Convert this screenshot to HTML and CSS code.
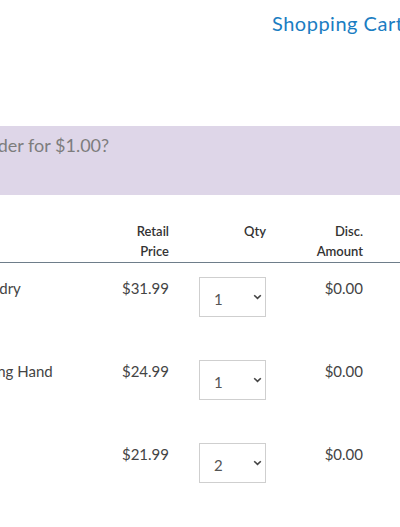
FILE: index.html
```html
<!DOCTYPE html>
<html lang="en">
<head>
  <meta charset="UTF-8">
  <meta name="viewport" content="width=device-width, initial-scale=1.0">
  <title>Shopping Cart</title>
  <link rel="stylesheet" href="styles.css">
</head>
<body>
  <div class="page">
    <header class="cart-header">
      <h1 class="cart-title">Shopping Cart</h1>
    </header>

    <div class="roundup">
      <p>Would you like to round up your order for $1.00?</p>
    </div>

    <div class="cart">
      <div class="cart-row cart-head">
        <div class="col-name">Item</div>
        <div class="col-price">Retail<br>Price</div>
        <div class="col-qty">Qty</div>
        <div class="col-disc">Disc.<br>Amount</div>
        <div class="col-total">Total</div>
      </div>

      <div class="cart-row item">
        <div class="col-name">Reusable 6 Wool Dryer Balls for Laundry</div>
        <div class="col-price">$31.99</div>
        <div class="col-qty">
          <div class="qty-select">
            <select><option selected>1</option><option>2</option><option>3</option></select>
            <svg class="chev" width="9" height="6" viewBox="0 0 9 6"><path d="M1.2 1.2l3.3 3.2 3.3-3.2" fill="none" stroke="#444" stroke-width="1.6"/></svg>
          </div>
        </div>
        <div class="col-disc">$0.00</div>
        <div class="col-total">$31.99</div>
      </div>

      <div class="cart-row item">
        <div class="col-name">Reacher Grabber Pickup Tool &amp; Helping Hand</div>
        <div class="col-price">$24.99</div>
        <div class="col-qty">
          <div class="qty-select">
            <select><option selected>1</option><option>2</option><option>3</option></select>
            <svg class="chev" width="9" height="6" viewBox="0 0 9 6"><path d="M1.2 1.2l3.3 3.2 3.3-3.2" fill="none" stroke="#444" stroke-width="1.6"/></svg>
          </div>
        </div>
        <div class="col-disc">$0.00</div>
        <div class="col-total">$24.99</div>
      </div>

      <div class="cart-row item">
        <div class="col-name"></div>
        <div class="col-price">$21.99</div>
        <div class="col-qty">
          <div class="qty-select">
            <select><option>1</option><option selected>2</option><option>3</option></select>
            <svg class="chev" width="9" height="6" viewBox="0 0 9 6"><path d="M1.2 1.2l3.3 3.2 3.3-3.2" fill="none" stroke="#444" stroke-width="1.6"/></svg>
          </div>
        </div>
        <div class="col-disc">$0.00</div>
        <div class="col-total">$43.98</div>
      </div>
    </div>
  </div>
</body>
</html>
```

FILE: styles.css
```css
body {
  margin: 0;
  overflow: hidden;
  font-family: Lato, "Open Sans", Arial, sans-serif;
  color: #444;
  background: #fff;
}
.page {
  width: 1000px;
  margin-left: -300px;
}
.cart-header {
  height: 126px;
}
.cart-title {
  margin: 0;
  padding: 10px 0 0 572px;
  font-size: 20px;
  font-weight: 400;
  line-height: 26px;
  letter-spacing: 0.5px;
  color: #1a7dc2;
}
.roundup {
  height: 69px;
  background: #ded6e8;
}
.roundup p {
  margin: 0;
  padding: 6px 0 0 23px;
  font-size: 18px;
  line-height: 26px;
  color: #7d7d7d;
  white-space: nowrap;
}
.cart {
  margin-top: 26px;
}
.cart-row {
  display: grid;
  grid-template-columns: 369px 100px 97px 97px 120px;
}
.cart-head {
  font-size: 13px;
  line-height: 20px;
  font-weight: 600;
  color: #333;
  padding-bottom: 1px;
  border-bottom: 1px solid #6e7d8a;
}
.cart-head .col-name {
  visibility: hidden;
}
.col-price,
.col-qty,
.col-disc,
.col-total {
  text-align: right;
  display: flex;
  justify-content: flex-end;
}
.item {
  font-size: 15px;
  line-height: 22px;
  padding: 14px 0 29px;
}
.item .col-name {
  padding-left: 55px;
  white-space: nowrap;
}
.qty-select {
  position: relative;
  width: 67px;
  height: 40px;
}
.qty-select select {
  appearance: none;
  -webkit-appearance: none;
  width: 100%;
  height: 100%;
  box-sizing: border-box;
  border: 1px solid #cfcfcf;
  border-radius: 0;
  background: #fff;
  font-family: inherit;
  font-size: 15px;
  color: #555;
  padding: 4px 0 0 14px;
  outline: none;
}
.chev {
  position: absolute;
  right: 4px;
  top: 17px;
  pointer-events: none;
}
```
